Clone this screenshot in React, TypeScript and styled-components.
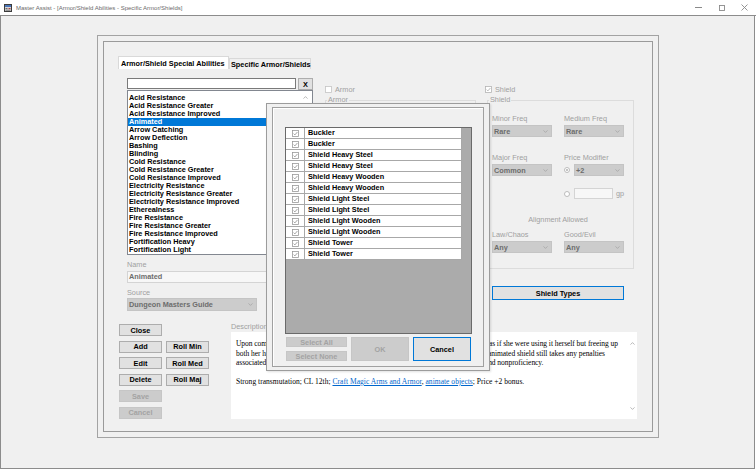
import React from "react";
import styled, { createGlobalStyle } from "styled-components";

const GlobalStyle = createGlobalStyle`
  html, body { margin: 0; padding: 0; background: #ffffff; }
  body { font-family: "Liberation Sans", Arial, sans-serif; }
  * { box-sizing: border-box; }
`;

const abilities = [
  "Acid Resistance",
  "Acid Resistance Greater",
  "Acid Resistance Improved",
  "Animated",
  "Arrow Catching",
  "Arrow Deflection",
  "Bashing",
  "Blinding",
  "Cold Resistance",
  "Cold Resistance Greater",
  "Cold Resistance Improved",
  "Electricity Resistance",
  "Electricity Resistance Greater",
  "Electricity Resistance Improved",
  "Etherealness",
  "Fire Resistance",
  "Fire Resistance Greater",
  "Fire Resistance Improved",
  "Fortification Heavy",
  "Fortification Light",
];

const shieldTypes = [
  "Buckler",
  "Buckler",
  "Shield Heavy Steel",
  "Shield Heavy Steel",
  "Shield Heavy Wooden",
  "Shield Heavy Wooden",
  "Shield Light Steel",
  "Shield Light Steel",
  "Shield Light Wooden",
  "Shield Light Wooden",
  "Shield Tower",
  "Shield Tower",
];

const Window = styled.div`
  position: relative;
  width: 756px;
  height: 470px;
  display: flex;
  flex-direction: column;
  background: #ffffff;
  overflow: hidden;
`;

const TitleBar = styled.div`
  height: 16px;
  flex: none;
  display: flex;
  align-items: center;
  padding-left: 4px;
  border-bottom: 1px solid #8c8c8c;
  background: #ffffff;
`;

const TitleText = styled.span`
  margin-left: 4px;
  font-size: 6px;
  color: #6a6a6a;
  white-space: nowrap;
`;

const Controls = styled.div`
  margin-left: auto;
  display: flex;
  height: 100%;
`;

const ControlBox = styled.div`
  width: 23px;
  display: flex;
  align-items: center;
  justify-content: center;
`;

const Client = styled.div`
  flex: 1;
  background: #f0f0f0;
  border-left: 1px solid #8c8c8c;
  border-right: 1px solid #8c8c8c;
  border-bottom: 1px solid #8c8c8c;
  margin-right: 1px;
  margin-bottom: 1px;
`;

const MdiChild = styled.div`
  margin: 19px 0 0 96px;
  width: 562px;
  height: 403px;
  border: 1px solid #a3a3a3;
  padding: 5px;
  background: #f0f0f0;
`;

const InnerFrame = styled.div`
  width: 100%;
  height: 100%;
  border: 1px solid #9a9a9a;
  display: flex;
  flex-direction: column;
`;

const TabStrip = styled.div`
  display: flex;
  align-items: flex-end;
  margin: 14px 0 0 14px;
  height: 13px;
`;

const Tab = styled.div<{ $active?: boolean; $w: number }>`
  width: ${(p) => p.$w}px;
  height: ${(p) => (p.$active ? 13 : 11)}px;
  padding-left: ${(p) => (p.$active ? 2 : 1)}px;
  display: flex;
  align-items: center;
  font-size: 7.3px;
  font-weight: bold;
  color: #000;
  white-space: nowrap;
  background: ${(p) => (p.$active ? "#ffffff" : "#f0f0f0")};
  border: 1px solid #d9d9d9;
  border-bottom: none;
`;

const TopSection = styled.div`
  display: flex;
  align-items: flex-start;
  height: 243px;
`;

const LeftCol = styled.div`
  margin: 9px 0 0 23px;
  width: 186px;
  display: flex;
  flex-direction: column;
`;

const SearchRow = styled.div`
  display: flex;
  gap: 2px;
  height: 12px;
`;

const SearchInput = styled.div`
  width: 169px;
  height: 11px;
  background: #ffffff;
  border: 1px solid #7a7a7a;
`;

const SmallX = styled.div`
  width: 15px;
  height: 12px;
  background: #e1e1e1;
  border: 1px solid #adadad;
  font-size: 7.3px;
  font-weight: bold;
  display: flex;
  align-items: center;
  justify-content: center;
`;

const ListBox = styled.div`
  height: 165px;
  background: #ffffff;
  border: 1px solid #828790;
  display: flex;
`;

const ListItems = styled.div`
  flex: 1;
  padding-top: 3px;
`;

const ListItem = styled.div<{ $selected?: boolean }>`
  height: 8px;
  line-height: 8px;
  padding-left: 1px;
  font-size: 7.3px;
  font-weight: bold;
  white-space: nowrap;
  color: ${(p) => (p.$selected ? "#ffffff" : "#000000")};
  background: ${(p) => (p.$selected ? "#0078d7" : "transparent")};
`;

const ScrollCol = styled.div<{ $w: number; $pad: number }>`
  width: ${(p) => p.$w}px;
  display: flex;
  flex-direction: column;
  align-items: center;
  justify-content: space-between;
  padding: ${(p) => p.$pad}px 0;
`;

const ScrollBtn = styled.div`
  height: 10px;
  display: flex;
  align-items: center;
  justify-content: center;
`;

const FieldLabel = styled.div<{ $mt: number }>`
  margin-top: ${(p) => p.$mt}px;
  height: 8px;
  line-height: 8px;
  font-size: 7.3px;
  color: #a0a0a0;
  white-space: nowrap;
`;

const ReadonlyBox = styled.div`
  margin-top: 2px;
  height: 12px;
  background: #f7f7f7;
  border: 1px solid #d4d4d4;
  padding-left: 1px;
  font-size: 7.3px;
  font-weight: bold;
  line-height: 10px;
  color: #6d6d6d;
`;

const Combo = styled.div<{ $w: number; $h?: number; $mt?: number }>`
  width: ${(p) => p.$w}px;
  height: ${(p) => p.$h ?? 12}px;
  margin-top: ${(p) => p.$mt ?? 0}px;
  background: #cccccc;
  border: 1px solid #c4c4c4;
  display: flex;
  align-items: center;
  justify-content: space-between;
  padding: 0 3px 0 1px;
  font-size: 7.3px;
  font-weight: bold;
  color: #6d6d6d;
  white-space: nowrap;
`;

const RightCol = styled.div`
  margin: 16px 0 0 12px;
  width: 309px;
  display: flex;
  flex-direction: column;
`;

const CheckRow = styled.div`
  display: grid;
  grid-template-columns: 160px auto;
  height: 8px;
`;

const CheckItem = styled.div`
  display: flex;
  align-items: center;
  gap: 3px;
  font-size: 7.3px;
  color: #a0a0a0;
`;

const GroupRow = styled.div`
  margin-top: 7px;
  display: flex;
  gap: 11px;
`;

const GroupBox = styled.div<{ $w: number }>`
  width: ${(p) => p.$w}px;
  height: 169px;
  border: 1px solid #dcdcdc;
  display: flex;
  flex-direction: column;
  align-items: flex-start;
`;

const GroupTitle = styled.div`
  margin: -5px 0 0 1px;
  padding: 0 1px;
  height: 8px;
  line-height: 8px;
  font-size: 7.3px;
  color: #a0a0a0;
  background: #f0f0f0;
`;

const GroupBody = styled.div`
  padding-left: 4px;
  display: flex;
  flex-direction: column;
`;

const FieldRow = styled.div<{ $mt: number }>`
  margin-top: ${(p) => p.$mt}px;
  display: grid;
  grid-template-columns: 60px 60px;
  column-gap: 12px;
`;

const Cell = styled.div`
  display: flex;
  flex-direction: column;
`;

const InlineRow = styled.div<{ $mt?: number }>`
  margin-top: ${(p) => p.$mt ?? 0}px;
  display: flex;
  align-items: center;
  gap: 4px;
`;

const Radio = styled.div<{ $on?: boolean }>`
  width: 6px;
  height: 6px;
  border-radius: 50%;
  border: 1px solid #bcbcbc;
  background: #ffffff;
  display: flex;
  align-items: center;
  justify-content: center;
  flex: none;
  &::after {
    content: "";
    width: 2px;
    height: 2px;
    border-radius: 50%;
    background: ${(p) => (p.$on ? "#b0b0b0" : "transparent")};
  }
`;

const GpBox = styled.div`
  width: 39px;
  height: 11px;
  background: #f7f7f7;
  border: 1px solid #d4d4d4;
`;

const GpText = styled.span`
  margin-left: -1px;
  font-size: 7.3px;
  color: #a0a0a0;
`;

const CenterLabel = styled.div<{ $mt: number }>`
  margin-top: ${(p) => p.$mt}px;
  width: 132px;
  text-align: center;
  height: 8px;
  line-height: 8px;
  font-size: 7.3px;
  color: #a0a0a0;
`;

const WinButton = styled.div<{ $w: number; $h: number; $focus?: boolean; $disabled?: boolean }>`
  width: ${(p) => p.$w}px;
  height: ${(p) => p.$h}px;
  display: flex;
  align-items: center;
  justify-content: center;
  font-size: 7.3px;
  font-weight: bold;
  white-space: nowrap;
  color: ${(p) => (p.$disabled ? "#a3a3a3" : "#000000")};
  background: ${(p) => (p.$disabled ? "#cccccc" : "#e1e1e1")};
  border: 1px solid
    ${(p) => (p.$focus ? "#0078d7" : p.$disabled ? "#c6c6c6" : "#adadad")};
`;

const ShieldTypesWrap = styled.div`
  margin: 17px 0 0 167px;
`;

const BottomSection = styled.div`
  margin-top: 10px;
  display: flex;
  align-items: flex-start;
`;

const ButtonGrid = styled.div`
  margin: 2px 0 0 15px;
  display: grid;
  grid-template-columns: 43px 43px;
  grid-auto-rows: 12px;
  column-gap: 4px;
  row-gap: 4.6px;
`;

const DescCol = styled.div`
  margin-left: 22px;
  width: 406px;
  display: flex;
  flex-direction: column;
`;

const DescLabel = styled.div`
  height: 10px;
  line-height: 9px;
  font-size: 7.3px;
  color: #a0a0a0;
`;

const DescBox = styled.div`
  height: 87px;
  background: #ffffff;
  display: flex;
`;

const DescText = styled.div`
  flex: 1;
  padding: 7px 0 0 5px;
  font-family: "Liberation Serif", "Times New Roman", serif;
  font-size: 7.5px;
  line-height: 9.5px;
  color: #000000;
`;

const DescLine = styled.div<{ $ls?: number }>`
  white-space: nowrap;
  height: 9.5px;
  letter-spacing: ${(p) => p.$ls ?? 0}px;
`;

const Link = styled.span`
  color: #0066cc;
  text-decoration: underline;
`;

/* modal dialog lying over the form */
const Dialog = styled.div`
  position: absolute;
  left: 266px;
  top: 103px;
  width: 224px;
  height: 268px;
  background: #f0f0f0;
  border: 1px solid #9c9c9c;
  padding: 3px 5px;
  box-shadow: 1px 1px 2px rgba(0, 0, 0, 0.12);
`;

const DialogPanel = styled.div`
  height: 100%;
  border: 1px solid #a0a0a0;
  box-shadow: inset 1px 1px 0 #ffffff;
  padding: 19px 0 0 12px;
  display: flex;
  flex-direction: column;
`;

const TypeGrid = styled.div`
  width: 187px;
  height: 207px;
  background: #ababab;
  border: 1px solid #6a6a6a;
`;

const TypeRow = styled.div`
  width: 176px;
  height: 11px;
  display: grid;
  grid-template-columns: 19px 1fr;
  background: #ffffff;
  border-bottom: 1px solid #a8a8a8;
  border-right: 1px solid #a8a8a8;
`;

const TypeCheck = styled.div`
  border-right: 1px solid #a8a8a8;
  display: flex;
  align-items: center;
  justify-content: center;
`;

const TypeName = styled.div`
  padding-left: 3px;
  font-size: 7.3px;
  font-weight: bold;
  line-height: 10px;
  white-space: nowrap;
`;

const DialogButtons = styled.div`
  margin: 3px 0 0 1px;
  display: flex;
  gap: 4px;
`;

const StackedButtons = styled.div`
  display: flex;
  flex-direction: column;
  gap: 4px;
`;

const Chevron = ({ up }: { up?: boolean }) => (
  <svg width="5" height="3" viewBox="0 0 5 3">
    <path
      d={up ? "M0.5 2.6 L2.5 0.6 L4.5 2.6" : "M0.5 0.4 L2.5 2.4 L4.5 0.4"}
      fill="none"
      stroke="#a6a6a6"
      strokeWidth="0.8"
    />
  </svg>
);

const CheckGlyph = ({ on, color = "#9a9a9a", size = 7 }: { on?: boolean; color?: string; size?: number }) => (
  <svg width={size} height={size} viewBox="0 0 7 7">
    <rect x="0.5" y="0.5" width="6" height="6" fill="#ffffff" stroke={on ? color : "#c4c4c4"} strokeWidth="0.8" />
    {on && <path d="M1.6 3.6 L2.9 4.9 L5.4 2" fill="none" stroke={color} strokeWidth="0.9" />}
  </svg>
);

const AppIcon = () => (
  <svg width="8" height="8" viewBox="0 0 8 8">
    <rect x="0.5" y="0.5" width="7" height="7" fill="#d6d6d6" stroke="#3c3c3c" />
    <rect x="1" y="1" width="6" height="2" fill="#4a74b8" />
    <rect x="1.5" y="4" width="2" height="1.2" fill="#6b6b6b" />
    <rect x="4.5" y="4" width="2" height="1.2" fill="#b04040" />
    <rect x="1.5" y="5.8" width="5" height="0.8" fill="#6b6b6b" />
  </svg>
);

const Combobox = ({ value, w, h, mt }: { value: string; w: number; h?: number; mt?: number }) => (
  <Combo $w={w} $h={h} $mt={mt}>
    <span>{value}</span>
    <Chevron />
  </Combo>
);

export default function App() {
  return (
    <>
      <GlobalStyle />
      <Window>
        <TitleBar>
          <AppIcon />
          <TitleText>Master Assist - [Armor/Shield Abilities - Specific Armor/Shields]</TitleText>
          <Controls>
            <ControlBox>
              <svg width="7" height="1" viewBox="0 0 7 1">
                <rect width="7" height="1" fill="#8a8a8a" />
              </svg>
            </ControlBox>
            <ControlBox>
              <svg width="6" height="6" viewBox="0 0 6 6">
                <rect x="0.5" y="0.5" width="5" height="5" fill="none" stroke="#8a8a8a" strokeWidth="0.9" />
              </svg>
            </ControlBox>
            <ControlBox>
              <svg width="7" height="7" viewBox="0 0 7 7">
                <path d="M0.5 0.5 L6.5 6.5 M6.5 0.5 L0.5 6.5" stroke="#8a8a8a" strokeWidth="0.9" />
              </svg>
            </ControlBox>
          </Controls>
        </TitleBar>

        <Client>
          <MdiChild>
            <InnerFrame>
              <TabStrip>
                <Tab $active $w={111}>Armor/Shield Special Abilities</Tab>
                <Tab $w={82}>Specific Armor/Shields</Tab>
              </TabStrip>

              <TopSection>
                <LeftCol>
                  <SearchRow>
                    <SearchInput />
                    <SmallX>X</SmallX>
                  </SearchRow>
                  <ListBox>
                    <ListItems>
                      {abilities.map((a) => (
                        <ListItem key={a} $selected={a === "Animated"}>
                          {a}
                        </ListItem>
                      ))}
                    </ListItems>
                    <ScrollCol $w={13} $pad={1}>
                      <ScrollBtn>
                        <Chevron up />
                      </ScrollBtn>
                      <ScrollBtn>
                        <Chevron />
                      </ScrollBtn>
                    </ScrollCol>
                  </ListBox>
                  <FieldLabel $mt={6}>Name</FieldLabel>
                  <ReadonlyBox>Animated</ReadonlyBox>
                  <FieldLabel $mt={6}>Source</FieldLabel>
                  <Combobox value="Dungeon Masters Guide" w={130} h={13} mt={1} />
                </LeftCol>

                <RightCol>
                  <CheckRow>
                    <CheckItem>
                      <CheckGlyph />
                      Armor
                    </CheckItem>
                    <CheckItem>
                      <CheckGlyph on color="#b4b4b4" />
                      Shield
                    </CheckItem>
                  </CheckRow>
                  <GroupRow>
                    <GroupBox $w={151}>
                      <GroupTitle>Armor</GroupTitle>
                    </GroupBox>
                    <GroupBox $w={147}>
                      <GroupTitle>Shield</GroupTitle>
                      <GroupBody>
                        <FieldRow $mt={11}>
                          <Cell>
                            <FieldLabel $mt={0}>Minor Freq</FieldLabel>
                            <Combobox value="Rare" w={60} mt={2} />
                          </Cell>
                          <Cell>
                            <FieldLabel $mt={0}>Medium Freq</FieldLabel>
                            <Combobox value="Rare" w={60} mt={2} />
                          </Cell>
                        </FieldRow>
                        <FieldRow $mt={17}>
                          <Cell>
                            <FieldLabel $mt={0}>Major Freq</FieldLabel>
                            <Combobox value="Common" w={60} mt={2} />
                          </Cell>
                          <Cell>
                            <FieldLabel $mt={0}>Price Modifier</FieldLabel>
                            <InlineRow $mt={2}>
                              <Radio $on />
                              <Combobox value="+2" w={50} />
                            </InlineRow>
                          </Cell>
                        </FieldRow>
                        <FieldRow $mt={12}>
                          <Cell />
                          <InlineRow>
                            <Radio />
                            <GpBox />
                            <GpText>gp</GpText>
                          </InlineRow>
                        </FieldRow>
                        <CenterLabel $mt={17}>Alignment Allowed</CenterLabel>
                        <FieldRow $mt={7}>
                          <Cell>
                            <FieldLabel $mt={0}>Law/Chaos</FieldLabel>
                            <Combobox value="Any" w={60} mt={2} />
                          </Cell>
                          <Cell>
                            <FieldLabel $mt={0}>Good/Evil</FieldLabel>
                            <Combobox value="Any" w={60} mt={2} />
                          </Cell>
                        </FieldRow>
                      </GroupBody>
                    </GroupBox>
                  </GroupRow>
                  <ShieldTypesWrap>
                    <WinButton $w={132} $h={14} $focus>
                      Shield Types
                    </WinButton>
                  </ShieldTypesWrap>
                </RightCol>
              </TopSection>

              <BottomSection>
                <ButtonGrid>
                  <WinButton $w={43} $h={12}>Close</WinButton>
                  <span />
                  <WinButton $w={43} $h={12}>Add</WinButton>
                  <WinButton $w={43} $h={12}>Roll Min</WinButton>
                  <WinButton $w={43} $h={12}>Edit</WinButton>
                  <WinButton $w={43} $h={12}>Roll Med</WinButton>
                  <WinButton $w={43} $h={12}>Delete</WinButton>
                  <WinButton $w={43} $h={12}>Roll Maj</WinButton>
                  <WinButton $w={43} $h={12} $disabled>Save</WinButton>
                  <span />
                  <WinButton $w={43} $h={12} $disabled>Cancel</WinButton>
                </ButtonGrid>

                <DescCol>
                  <DescLabel>Description</DescLabel>
                  <DescBox>
                    <DescText>
                      <DescLine $ls={-0.05}>
                        Upon command, an animated shield floats within 2 feet of the wielder, protecting her as if she were using it herself but freeing up
                      </DescLine>
                      <DescLine $ls={-0.05}>
                        both her hands. Only one shield can protect a character at a time. A character with an animated shield still takes any penalties
                      </DescLine>
                      <DescLine $ls={-0.05}>
                        associated with shield use, such as armor check penalty, arcane spell failure chance, and nonproficiency.
                      </DescLine>
                      <DescLine />
                      <DescLine $ls={0.03}>
                        Strong transmutation; CL 12th; <Link>Craft Magic Arms and Armor</Link>,{" "}
                        <Link>animate objects</Link>; Price +2 bonus.
                      </DescLine>
                    </DescText>
                    <ScrollCol $w={9} $pad={6}>
                      <ScrollBtn>
                        <Chevron up />
                      </ScrollBtn>
                      <ScrollBtn>
                        <Chevron />
                      </ScrollBtn>
                    </ScrollCol>
                  </DescBox>
                </DescCol>
              </BottomSection>
            </InnerFrame>
          </MdiChild>
        </Client>

        <Dialog>
          <DialogPanel>
            <TypeGrid>
              {shieldTypes.map((t, i) => (
                <TypeRow key={i}>
                  <TypeCheck>
                    <CheckGlyph on size={7} />
                  </TypeCheck>
                  <TypeName>{t}</TypeName>
                </TypeRow>
              ))}
            </TypeGrid>
            <DialogButtons>
              <StackedButtons>
                <WinButton $w={61} $h={10} $disabled>Select All</WinButton>
                <WinButton $w={61} $h={10} $disabled>Select None</WinButton>
              </StackedButtons>
              <WinButton $w={58} $h={24} $disabled>OK</WinButton>
              <WinButton $w={58} $h={24} $focus>Cancel</WinButton>
            </DialogButtons>
          </DialogPanel>
        </Dialog>
      </Window>
    </>
  );
}
